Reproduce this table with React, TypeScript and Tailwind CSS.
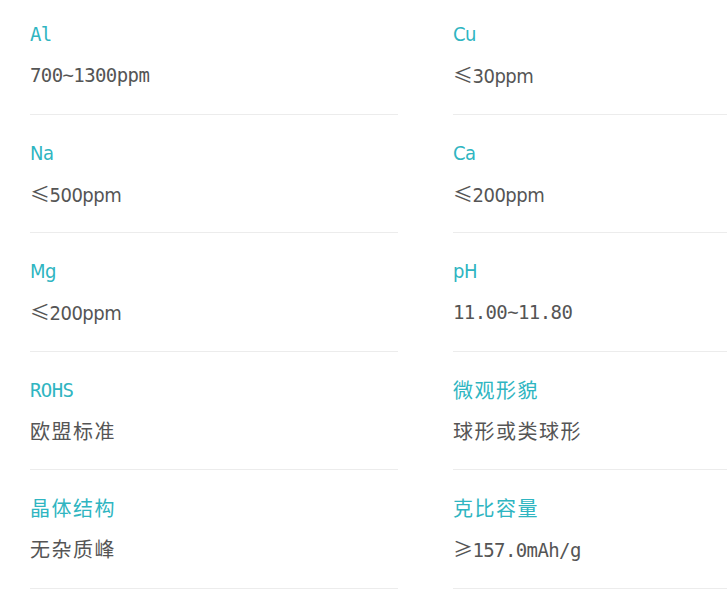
type Face = "mono" | "sans" | "cjk";

interface Spec {
    label: string;
    labelFace: Face;
    value: string;
    valueFace: Face;
}

const specs: Spec[] = [
    { label: "Al", labelFace: "mono", value: "700~1300ppm", valueFace: "mono" },
    { label: "Cu", labelFace: "sans", value: "≤30ppm", valueFace: "sans" },
    { label: "Na", labelFace: "sans", value: "≤500ppm", valueFace: "sans" },
    { label: "Ca", labelFace: "sans", value: "≤200ppm", valueFace: "sans" },
    { label: "Mg", labelFace: "sans", value: "≤200ppm", valueFace: "sans" },
    { label: "pH", labelFace: "sans", value: "11.00~11.80", valueFace: "mono" },
    { label: "ROHS", labelFace: "mono", value: "欧盟标准", valueFace: "cjk" },
    { label: "微观形貌", labelFace: "cjk", value: "球形或类球形", valueFace: "cjk" },
    { label: "晶体结构", labelFace: "cjk", value: "无杂质峰", valueFace: "cjk" },
    { label: "克比容量", labelFace: "cjk", value: "≥157.0mAh/g", valueFace: "mono" },
];

const faceClass: Record<Face, string> = {
    mono: "font-['DejaVu_Sans_Mono','Noto_Sans_CJK_SC',monospace] text-[19px] tracking-[-0.6px]",
    sans: "font-['DejaVu_Sans','Noto_Sans_CJK_SC',sans-serif] font-stretch-condensed text-[20px] tracking-[-0.5px]",
    cjk: "font-['Noto_Sans_CJK_SC',sans-serif] text-[20px] tracking-[1.5px]",
};

// comparison signs are drawn by the CJK face in the original
const Text = ({ text, face }: { text: string; face: Face }) => {
    const sign = text.match(/^[≤≥]/);

    if (!sign) {
        return <span className={`${faceClass[face]} leading-[30px]`}>{text}</span>;
    }

    return (
        <span className={`${faceClass[face]} leading-[30px]`}>
            <span className="font-['Noto_Sans_CJK_SC',sans-serif] text-[20px] leading-[30px]">
                {sign[0]}
            </span>
            {text.slice(1)}
        </span>
    );
};

const SpecItem = ({ spec }: { spec: Spec }) => (
    <div className="border-b border-[#ececec] pt-[23px] pb-[23.5px]">
        <div className="h-[30px] leading-[30px] text-[#2fb5c1]">
            <Text text={spec.label} face={spec.labelFace} />
        </div>
        <div className="mt-[11px] h-[30px] leading-[30px] text-[#555555]">
            <Text text={spec.value} face={spec.valueFace} />
        </div>
    </div>
);

export default function App() {
    return (
        <div className="h-[589px] w-[727px] overflow-hidden bg-white">
            <div className="-mt-[4px] grid w-[821px] grid-cols-[368px_368px] gap-x-[55px] pl-[30px]">
                {specs.map((spec) => (
                    <SpecItem key={spec.label} spec={spec} />
                ))}
            </div>
        </div>
    );
}
